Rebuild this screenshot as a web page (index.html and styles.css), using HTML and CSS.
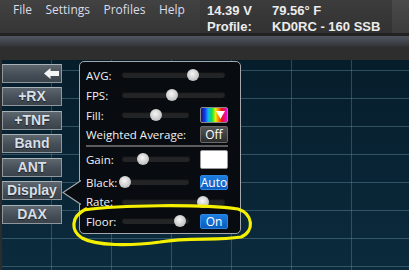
FILE: index.html
```html
<!DOCTYPE html>
<html lang="en">
<head>
    <meta charset="UTF-8">
    <title>SmartSDR - Display</title>
    <link rel="stylesheet" href="styles.css">
</head>
<body>
<div class="app">

    <!-- Title / menu bar -->
    <header class="titlebar">
        <nav class="menu">
            <span>File</span>
            <span>Settings</span>
            <span>Profiles</span>
            <span>Help</span>
        </nav>
        <div class="status">
            <span>14.39 V</span>
            <span>79.56° F</span>
            <span>Profile:</span>
            <span>KD0RC - 160 SSB</span>
        </div>
        <div class="corner"></div>
    </header>

    <div class="toolstrip"></div>

    <!-- Panadapter -->
    <main class="pan">
        <div class="side">
            <button class="side-btn back">
                <svg width="15" height="11" viewBox="0 0 15 11"><path d="M0 5.5 L6.5 0 L6.5 3 L15 3 L15 8 L6.5 8 L6.5 11 Z" fill="#f2f4f6"/></svg>
            </button>
            <button class="side-btn">+RX</button>
            <button class="side-btn">+TNF</button>
            <button class="side-btn">Band</button>
            <button class="side-btn">ANT</button>
            <button class="side-btn">Display</button>
            <button class="side-btn">DAX</button>
        </div>

        <section class="popup">
            <svg class="pointer" width="19" height="26" viewBox="0 0 19 26">
                <polygon points="19,0 1,12.5 19,25" fill="#080c10"/>
                <polyline points="19,0.5 1,12.5 19,24.5" fill="none" stroke="#a4a8ac" stroke-width="1.2"/>
            </svg>

            <div class="row">
                <span class="lbl">AVG:</span>
                <div class="track full"><i class="thumb" style="left: 69%"></i></div>
            </div>
            <div class="row">
                <span class="lbl">FPS:</span>
                <div class="track full"><i class="thumb" style="left: 48.5%"></i></div>
            </div>
            <div class="row">
                <span class="lbl">Fill:</span>
                <div class="track"><i class="thumb" style="left: 50%"></i></div>
                <span class="btn colors"><svg width="9" height="8" viewBox="0 0 9 8"><path d="M0 0 H9 L4.5 8 Z" fill="#fff"/></svg></span>
            </div>
            <div class="row wa">
                <span class="lbl wide">Weighted Average:</span>
                <span class="btn off">Off</span>
            </div>

            <div class="sep"></div>

            <div class="row gain">
                <span class="lbl">Gain:</span>
                <div class="track"><i class="thumb" style="left: 31%"></i></div>
                <span class="btn white"></span>
            </div>
            <div class="row black">
                <span class="lbl">Black:</span>
                <div class="track"><i class="thumb" style="left: 4.4%"></i></div>
                <span class="btn blue">Auto</span>
            </div>
            <div class="row rate">
                <span class="lbl">Rate:</span>
                <div class="track full"><i class="thumb" style="left: 78.6%"></i></div>
            </div>
            <div class="row">
                <span class="lbl">Floor:</span>
                <div class="track"><i class="thumb" style="left: 86.8%"></i></div>
                <span class="btn blue">On</span>
            </div>
        </section>
    </main>

    <!-- hand drawn highlight -->
    <svg class="annot" width="409" height="270" viewBox="0 0 409 270">
        <path d="M84 210 C120 205, 200 204, 238 209 C253 214, 255 231, 241 237 C216 241, 190 237, 160 242 C130 246, 96 246, 82 238 C71 231, 70 217, 86 209"
              fill="none" stroke="#f4f000" stroke-width="3.2" stroke-linecap="round"/>
    </svg>
</div>
</body>
</html>
```

FILE: styles.css
```css
body {
    margin: 0;
    padding: 0;
    background: #2e2e2e;
}

.app {
    position: relative;
    width: 409px;
    height: 270px;
    overflow: hidden;
    display: flex;
    flex-direction: column;
}

/* title bar */
.titlebar {
    height: 33px;
    display: flex;
    background: linear-gradient(#424242, #353535);
}

.menu {
    display: flex;
    gap: 13.5px;
    padding: 2px 0 0 13px;
    width: 187px;
    font-family: "Open Sans", sans-serif;
    font-size: 12px;
    line-height: 16px;
    color: #dcdcea;
}

.status {
    display: grid;
    grid-template-columns: 65px auto;
    align-content: start;
    padding: 3px 0 0 7px;
    width: 185px;
    font-family: "Liberation Sans", Arial, sans-serif;
    font-weight: bold;
    font-size: 13px;
    line-height: 16px;
    color: #ececec;
    background: linear-gradient(#3c3c3c, #323232);
}

.corner {
    flex: 1;
    background: linear-gradient(#4a4a4a, #3c3c3c);
}

.toolstrip {
    height: 27px;
    background: linear-gradient(#222 0, #222 3px, #50545e 3px, #464a52 7px, #383a3e 12px, #2e2e2e 14px, #2e2e2e 100%);
}

/* panadapter */
.pan {
    flex: 1;
    display: flex;
    align-items: flex-start;
    border-left: 2px solid #2c2c2c;
    background:
        linear-gradient(90deg, rgba(100, 140, 160, 0.4) 1px, transparent 1px) 49px 0 / 60px 100%,
        linear-gradient(rgba(100, 140, 160, 0.45) 1px, transparent 1px) 0 10px / 100% 28px,
        linear-gradient(#061d2b, #0b2b3d);
}

.side {
    display: flex;
    flex-direction: column;
    gap: 4.5px;
    padding-top: 3.5px;
    width: 60px;
}

.side-btn {
    height: 19px;
    padding: 0;
    border: 1px solid #8e969e;
    border-top-color: #a8b0b8;
    background: linear-gradient(#5e666e, #464e58 55%, #3a424a);
    color: #d8dfe6;
    font-family: "Liberation Sans", Arial, sans-serif;
    font-weight: bold;
    font-size: 14px;
    line-height: 17px;
    text-align: center;
    text-shadow: 0 1px 1px #1c2228;
}

.side-btn.back {
    display: flex;
    align-items: center;
    justify-content: flex-end;
    padding-right: 2px;
}

/* display popup */
.popup {
    position: relative;
    box-sizing: border-box;
    width: 162px;
    height: 173px;
    margin: 1px 0 0 17px;
    padding: 3px 12px 2px 6px;
    border: 1px solid #a4a8ac;
    border-radius: 5px;
    background: #080c10;
    font-family: "Open Sans", sans-serif;
    font-size: 11.5px;
    color: #f2f2f2;
}

.pointer {
    position: absolute;
    left: -18px;
    top: 118px;
}

.row {
    display: flex;
    align-items: center;
    height: 20px;
}

.row.wa {
    height: 18px;
}

.row.gain {
    margin-top: 2px;
}

.row.black {
    margin-top: 3px;
}

.row.rate {
    height: 19px;
}

.lbl {
    width: 36px;
    flex: none;
}

.lbl.wide {
    width: auto;
}

.track {
    position: relative;
    flex: 1;
    height: 6px;
    margin-right: 11px;
    border-radius: 3px;
    background: #222426;
    box-shadow: inset 0 1px 1px #111;
}

.track.full {
    margin-right: 3px;
}

.thumb {
    position: absolute;
    top: -3px;
    width: 12px;
    height: 12px;
    margin-left: -6px;
    border-radius: 50%;
    background: radial-gradient(circle at 45% 40%, #f6f6f6, #d4d4d4 45%, #a8a8a8 100%);
}

.btn {
    box-sizing: border-box;
    width: 28px;
    height: 16px;
    flex: none;
    display: flex;
    align-items: center;
    justify-content: center;
    border-radius: 2px;
    font-size: 12px;
    color: #fff;
}

.btn.colors {
    justify-content: flex-end;
    padding-right: 2px;
    border: 1px solid #8a8a8a;
    background: linear-gradient(90deg, #1a1470, #1438f0 15%, #10b8f0 28%, #10e040 42%, #f0f000 56%, #ff8000 68%, #f01010 80%, #e010e0);
}

.row.wa .btn.off {
    margin-left: auto;
    height: 17px;
    border: 1px solid #6a6a6a;
    background: linear-gradient(#545454, #2c2c2c);
}

.btn.white {
    height: 19px;
    margin-left: -1px;
    border: 1px solid #9a9a9a;
    background: #fff;
}

.btn.blue {
    height: 15px;
    background: linear-gradient(#1c7ee0, #0a5cc0);
    border: 1px solid #2a86e0;
}

.sep {
    height: 2px;
    margin-top: 2px;
    background: #5c5c5c;
}

.annot {
    position: absolute;
    left: 0;
    top: 0;
    pointer-events: none;
}
```
